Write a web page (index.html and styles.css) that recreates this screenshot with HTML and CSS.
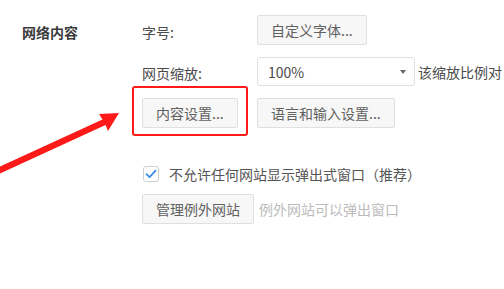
FILE: index.html
```
<!DOCTYPE html>
<html lang="zh-CN">
<head>
    <meta charset="UTF-8">
    <meta name="viewport" content="width=device-width, initial-scale=1.0">
    <title>网络内容设置</title>
    <link rel="stylesheet" href="styles.css">
</head>
<body>

    <div class="page">
        <!-- 网络内容 -->
        <div class="section">
            <div class="section-title">网络内容</div>
            <div class="section-body">
                <div class="row">
                    <span class="label">字号:</span>
                    <button class="btn">自定义字体...</button>
                </div>
                <div class="row row-zoom">
                    <span class="label">网页缩放:</span>
                    <div class="select">
                        <span>100%</span>
                        <span class="caret"></span>
                    </div>
                    <span class="hint">该缩放比例对</span>
                </div>
                <div class="row row-buttons">
                    <div class="label"><button class="btn">内容设置...</button></div>
                    <button class="btn">语言和输入设置...</button>
                </div>
                <label class="check-row">
                    <span class="checkbox">
                        <svg width="12" height="10" viewBox="0 0 12 10"><path d="M1.5 5.2 L4.6 8.2 L10.5 1.6" fill="none" stroke="#3b8be0" stroke-width="1.8" stroke-linecap="round" stroke-linejoin="round"/></svg>
                    </span>
                    不允许任何网站显示弹出式窗口（推荐）
                </label>
                <div class="row row-popups">
                    <button class="btn">管理例外网站</button>
                    <span class="muted">例外网站可以弹出窗口</span>
                </div>
            </div>
        </div>

        <!-- 标注 -->
        <div class="highlight"></div>
        <svg class="arrow" width="504" height="289" viewBox="0 0 504 289">
            <polygon points="119,113 99,114 102.5,119.5 -3,168 -3,175 105.5,125 108,131" fill="#ff1a1a"/>
        </svg>
    </div>

</body>
</html>
```

FILE: styles.css
```
html, body {
    margin: 0;
    background-color: #fff;
    overflow: hidden;
}
body {
    font-family: "Noto Sans CJK SC", "Noto Sans", sans-serif;
    font-size: 14px;
    color: #555;
}
.page {
    position: relative;
    width: 504px;
    height: 289px;
    padding: 15px 0 0 22px;
    box-sizing: border-box;
}
.section {
    display: flex;
}
.section-title {
    width: 120px;
    font-weight: bold;
    color: #3a3a3a;
    line-height: 30px;
    padding-top: 2px;
}
.section-body {
    display: flex;
    flex-direction: column;
}
.row {
    display: flex;
    align-items: center;
    height: 30px;
    white-space: nowrap;
}
.row-zoom {
    margin-top: 12px;
    height: 29px;
}
.row-buttons {
    margin-top: 12px;
}
.row-popups {
    margin-top: 10px;
}
.label {
    width: 115px;
    color: #4a4a4a;
    padding-top: 3px;
}
.row-buttons .label {
    padding-top: 0;
}
.btn {
    height: 30px;
    padding: 0 13px;
    font-family: inherit;
    font-size: 14px;
    color: #616161;
    background-color: #f7f7f7;
    border: 1px solid #e0e0e0;
    border-radius: 2px;
}
.select {
    display: flex;
    align-items: center;
    justify-content: space-between;
    width: 158px;
    height: 29px;
    padding: 0 8px 0 10px;
    box-sizing: border-box;
    border: 1px solid #e0e0e0;
    border-radius: 3px;
    color: #4a4a4a;
}
.caret {
    width: 0;
    height: 0;
    border-left: 3.5px solid transparent;
    border-right: 3.5px solid transparent;
    border-top: 4px solid #666;
}
.hint {
    margin-left: 3px;
    color: #4a4a4a;
}
.check-row {
    display: flex;
    align-items: center;
    height: 20px;
    margin-top: 36px;
    margin-left: 1px;
    white-space: nowrap;
}
.checkbox {
    display: flex;
    align-items: center;
    justify-content: center;
    width: 16px;
    height: 16px;
    margin-right: 10px;
    box-sizing: border-box;
    border: 1px solid #cfcfcf;
    border-radius: 3px;
    background-color: #fff;
}
.muted {
    margin-left: 5px;
    color: #bbb;
}
.highlight {
    position: absolute;
    left: 132px;
    top: 86px;
    width: 116px;
    height: 50px;
    box-sizing: border-box;
    border: 2px solid #ff1a1a;
    border-radius: 3px;
}
.arrow {
    position: absolute;
    left: 0;
    top: 0;
    pointer-events: none;
}
```
